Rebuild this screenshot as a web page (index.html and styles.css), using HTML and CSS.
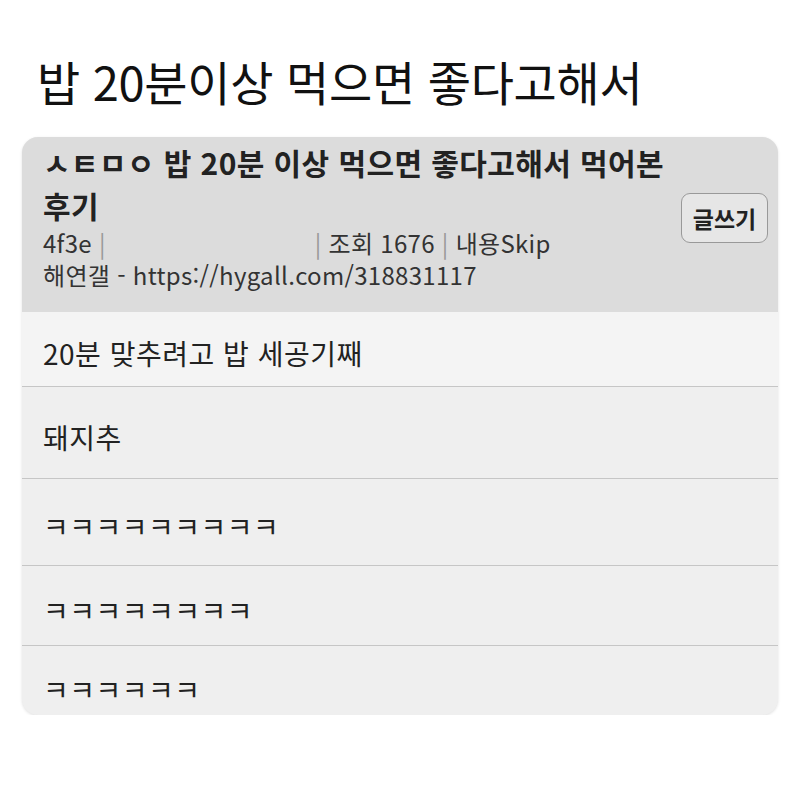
FILE: index.html
```html
<!DOCTYPE html>
<html lang="ko">
<head>
    <meta charset="UTF-8">
    <meta name="viewport" content="width=device-width, initial-scale=1.0">
    <title>밥 20분이상 먹으면 좋다고해서</title>
    <link rel="stylesheet" href="styles.css">
</head>
<body>
    <h1 class="page-title">밥 20분이상 먹으면 좋다고해서</h1>

    <div class="post-card">
        <div class="post-head">
            <div class="post-info">
                <div class="post-title">ㅅㅌㅁㅇ 밥 20분 이상 먹으면 좋다고해서 먹어본 후기</div>
                <div class="post-meta">4f3e <span class="sep">|</span><span class="gap"></span><span class="sep">|</span> 조회 1676 <span class="sep">|</span> 내용Skip</div>
                <div class="post-meta">해연갤 - https://hygall.com/318831117</div>
            </div>
            <button class="write-btn">글쓰기</button>
        </div>

        <div class="comment first">20분 맞추려고 밥 세공기째</div>
        <div class="comment tall">돼지추</div>
        <div class="comment">ㅋㅋㅋㅋㅋㅋㅋㅋㅋ</div>
        <div class="comment short">ㅋㅋㅋㅋㅋㅋㅋㅋ</div>
        <div class="comment last">ㅋㅋㅋㅋㅋㅋ</div>
    </div>
</body>
</html>
```

FILE: styles.css
```css
body {
    margin: 0;
    padding: 0 22px;
    background: #fff;
    color: #222;
    font-family: "Noto Sans CJK KR", "Noto Sans", sans-serif;
}
.page-title {
    margin: 0;
    padding: 48px 0 0 15px;
    box-sizing: border-box;
    height: 137px;
    font-size: 47px;
    font-weight: normal;
    line-height: 66px;
    letter-spacing: -0.3px;
    color: #111;
}
.post-card {
    background: #efefef;
    border-radius: 16px;
    overflow: hidden;
    box-shadow: 0 1px 3px rgba(0, 0, 0, 0.12);
}
.post-head {
    display: flex;
    align-items: flex-start;
    background: #dcdcdc;
    height: 175px;
    padding: 0 10px 0 21px;
    box-sizing: border-box;
}
.post-info {
    flex: 1;
    padding-top: 4px;
}
.post-title {
    font-size: 30px;
    font-weight: bold;
    line-height: 43px;
    letter-spacing: 0.4px;
    word-break: keep-all;
    max-width: 640px;
}
.post-meta {
    font-size: 24px;
    line-height: 32px;
    letter-spacing: 0.3px;
    color: #333;
}
.sep {
    color: #999;
}
.gap {
    display: inline-block;
    width: 209px;
}
.write-btn {
    margin-top: 56px;
    width: 87px;
    height: 50px;
    border: 1.5px solid #999;
    border-radius: 9px;
    background: #e6e6e6;
    font-family: inherit;
    font-size: 23px;
    font-weight: bold;
    color: #222;
}
.comment {
    display: flex;
    align-items: center;
    height: 87px;
    padding: 8px 21px 0;
    font-size: 28px;
    letter-spacing: 0.5px;
    border-top: 1.5px solid #c6c6c6;
    box-sizing: border-box;
}
.comment.first {
    border-top: none;
    height: 74px;
    background: #f4f4f4;
}
.comment.tall {
    height: 92px;
}
.comment.short {
    height: 80px;
}
.comment.last {
    height: 70px;
    padding-top: 16px;
}
```
